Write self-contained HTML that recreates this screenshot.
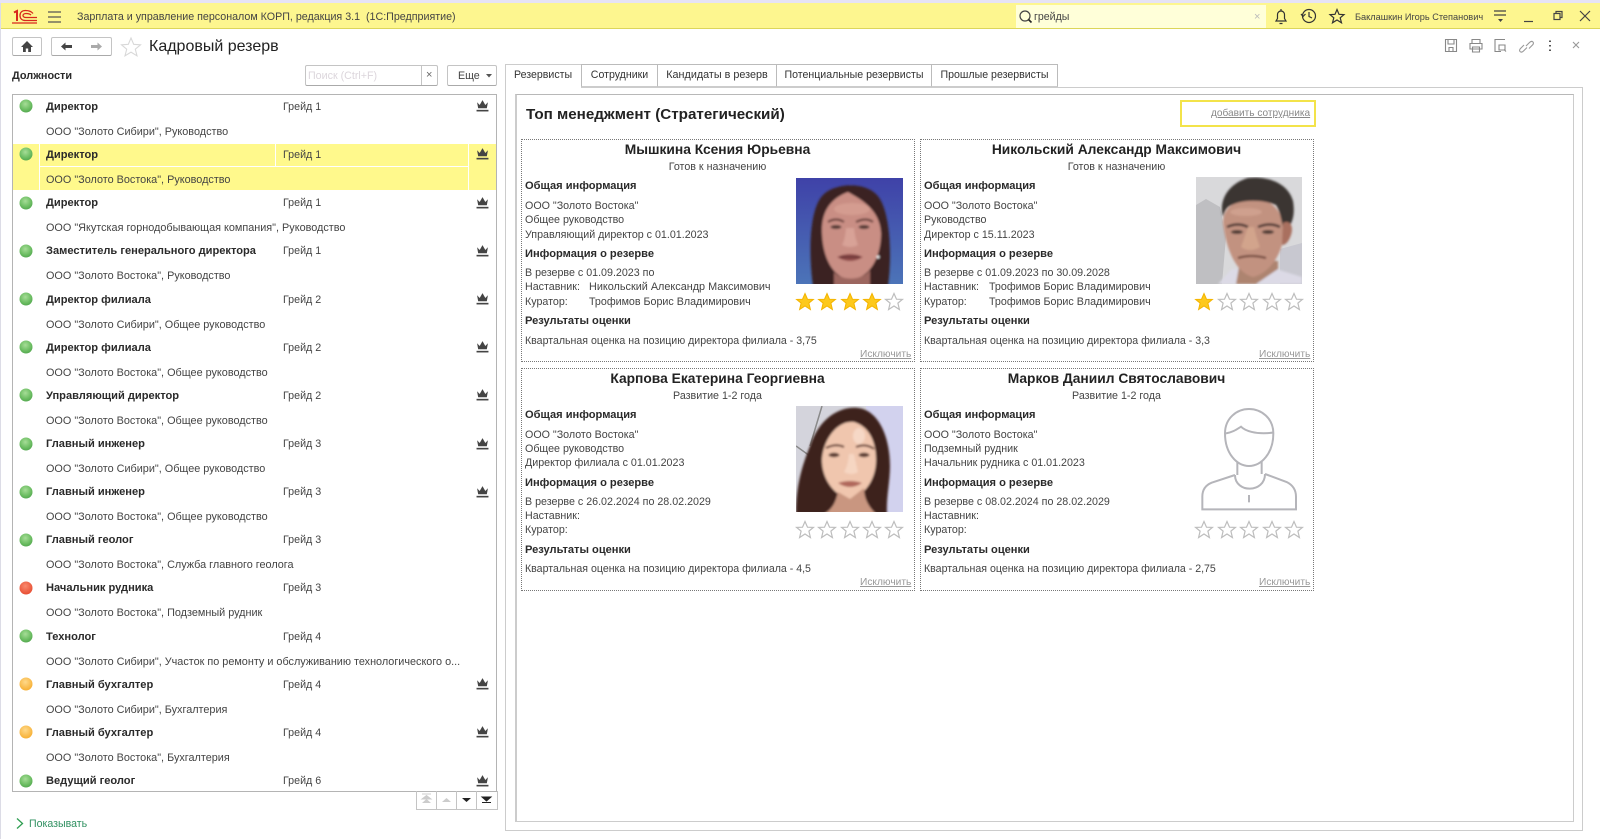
<!DOCTYPE html>
<html lang="ru"><head><meta charset="utf-8"><title>Кадровый резерв</title>
<style>
html,body{margin:0;padding:0;background:#fff}
#p{position:relative;width:1600px;height:839px;overflow:hidden;background:#fff;font-family:"Liberation Sans",Arial,sans-serif;font-size:10.7px;color:#333;filter:blur(.3px)}
#p div,#p svg{position:absolute}
.t{white-space:nowrap;line-height:16px;height:16px}
.b{font-weight:bold;color:#2a2a2a;font-size:11.1px}
.tab{top:64px;height:23px;border:1px solid #bbb;border-bottom:1px solid #ccc;box-sizing:border-box;background:#fff;line-height:21px;text-align:center;white-space:nowrap;font-size:10.6px}
.card{border:1px dotted #777;box-sizing:border-box;width:394px;height:223px;background:#fff}
.g{color:#444}
.l{font-size:10.85px}
.q{font-size:10.6px}
.ex{color:#999;text-decoration:underline;font-size:10.2px}
.n{font-size:13.8px;font-weight:bold;color:#222;text-align:center;width:393px}
.s{text-align:center;width:393px;color:#444}
</style></head><body>
<div id="p">
<svg width="0" height="0" style="left:0;top:0"><defs>
<symbol id="st" viewBox="-10 -10 20 20" overflow="visible"><path d="M0,-8.5 2.5,-2.8 8.4,-2.6 3.9,1.1 5.4,7.5 0,4 -5.4,7.5 -3.9,1.1 -8.4,-2.6 -2.5,-2.8Z" fill="#fff" stroke="#bdbdbd" stroke-width="1.2"/></symbol>
<symbol id="sf" viewBox="-10 -10 20 20" overflow="visible"><path d="M0,-8.5 2.5,-2.8 8.4,-2.6 3.9,1.1 5.4,7.5 0,4 -5.4,7.5 -3.9,1.1 -8.4,-2.6 -2.5,-2.8Z" fill="#fdc91c" stroke="#f4b400" stroke-width="1"/></symbol>
<symbol id="cr" viewBox="0 0 12 12"><path d="M1,3 3.4,5.500 6,1 8.6,5.500 11,3 10,8.5H2Z" fill="#444"/><rect x="0.5" y="10" width="11" height="1.5" fill="#444"/></symbol>
<radialGradient id="gr" cx=".45" cy=".35" r=".7"><stop offset="0" stop-color="#a6dd97"/><stop offset=".6" stop-color="#6fbf65"/><stop offset="1" stop-color="#4fa54c"/></radialGradient>
<radialGradient id="re" cx=".45" cy=".35" r=".7"><stop offset="0" stop-color="#f98a6e"/><stop offset="1" stop-color="#e6492e"/></radialGradient>
<radialGradient id="or" cx=".45" cy=".35" r=".7"><stop offset="0" stop-color="#ffd98a"/><stop offset="1" stop-color="#f6ac2c"/></radialGradient>
<symbol id="dg" viewBox="0 0 14 14"><circle cx="7" cy="7" r="6.5" fill="url(#gr)"/></symbol>
<symbol id="dr" viewBox="0 0 14 14"><circle cx="7" cy="7" r="6.5" fill="url(#re)"/></symbol>
<symbol id="do" viewBox="0 0 14 14"><circle cx="7" cy="7" r="6.5" fill="url(#or)"/></symbol>
<filter id="bl"><feGaussianBlur stdDeviation="1"/></filter>
<linearGradient id="bbg" x1="0" y1="0" x2="0" y2="1"><stop offset="0" stop-color="#3f42a8"/><stop offset="1" stop-color="#4c74b8"/></linearGradient>
</defs></svg>

<!-- title bar -->
<div style="left:0;top:0;width:1600px;height:3px;background:#e6e3f4"></div>
<div style="left:0;top:3px;width:1600px;height:25px;background:#fdf68f;border-bottom:1px solid #dcd65a"></div>
<div style="left:0;top:3px;width:1px;height:836px;background:#dcdce6"></div>
<svg style="left:12px;top:9px" width="26" height="15" fill="none" stroke="#d8261c"><path d="M2,3.500 5,2V12" stroke-width="2"/><path d="M21,4.500C19,2 16,1.500 13.500,1.500C10,1.500 8,3.500 8,6.500C8,9.500 10,11.500 13.500,11.500H25" stroke-width="1.300"/><path d="M19,6C18,5 16,4.500 14,4.500C12,4.500 11,5.500 11,6.500C11,7.500 12,8.500 14,8.500H25" stroke-width="1.300"/><path d="M0,14H25" stroke-width="1.200"/></svg>
<svg style="left:48px;top:11px" width="13" height="12"><path d="M0,1H13M0,6H13M0,11H13" stroke="#555" stroke-width="1.3"/></svg>
<div class="t" style="left:77px;top:9px;color:#444">Зарплата и управление персоналом КОРП, редакция 3.1&nbsp; (1С:Предприятие)</div>
<div style="left:1016px;top:5px;width:250px;height:23px;background:#ffffd9"></div>
<svg style="left:1018px;top:9px" width="15" height="15"><circle cx="7" cy="7" r="5" fill="none" stroke="#444" stroke-width="1.2"/><path d="M10.5,10.5 13.5,13.5" stroke="#222" stroke-width="1.6"/></svg>
<div class="t" style="left:1034px;top:9px;color:#444;font-size:10.6px">грейды</div>
<div class="t" style="left:1254px;top:9px;color:#bbb;font-size:11px">×</div>
<svg style="left:1273px;top:8px" width="150" height="17" fill="none" stroke="#333" stroke-width="1.2"><path d="M3,13H13L11.5,10.5V6.5A3.5,3.5 0 0 0 4.5,6.5V10.5ZM6.5,15.5H9.5M8,1V3"/><circle cx="36" cy="8" r="6.5"/><path d="M36,4V8.5L39,10M28,6 30,8.5 32.5,6"/><path transform="translate(1,0)" d="M63,1.5 65,6.3 70,6.6 66.200,9.800 67.500,14.800 63,12 58.500,14.800 59.800,9.800 56,6.600 61,6.300Z"/></svg>
<div class="t" style="left:1355px;top:9px;font-size:9.2px;color:#444">Баклашкин Игорь Степанович</div>
<svg style="left:1493px;top:8px" width="100" height="17" fill="none" stroke="#444" stroke-width="1.2"><path d="M1,3H13M1,7H13"/><path d="M5,11H10L7.500,14Z" fill="#444" stroke="none"/><path d="M31,13.500H40"/><g transform="translate(1,0)"><rect x="60" y="5.500" width="6" height="6"/><path d="M62,5.500V3.500H68V9.500H66"/></g><path d="M87,3 97,13M97,3 87,13"/></svg>

<!-- toolbar -->
<div style="left:12px;top:37px;width:30px;height:19px;border:1px solid #c4c4c4;border-bottom-color:#aaa;border-radius:2px;box-sizing:border-box"></div>
<svg style="left:20px;top:40px" width="14" height="13"><path d="M7,1 13,7H11V12H8.200V8.500H5.800V12H3V7H1Z" fill="#444"/></svg>
<div style="left:51px;top:37px;width:61px;height:19px;border:1px solid #c4c4c4;border-bottom-color:#aaa;border-radius:2px;box-sizing:border-box"></div>
<svg style="left:60px;top:41px" width="44" height="11"><path d="M1,5.500 5.500,1.500V4H12V7H5.500V9.500Z" fill="#444"/><path d="M42,5.500 37.500,1.500V4H31V7H37.500V9.500Z" fill="#aaa"/></svg>
<svg style="left:120px;top:36px" width="22" height="21"><path d="M11,2 13.700,8.300 20.500,8.800 15.300,13.200 17,19.800 11,16.200 5,19.800 6.700,13.200 1.500,8.800 8.300,8.300Z" fill="#fff" stroke="#d8d8d8" stroke-width="1.1"/></svg>
<div class="t" style="left:149px;top:38px;font-size:16px;color:#222;height:18px;line-height:18px">Кадровый резерв</div>
<svg style="left:1444px;top:38px" width="142" height="16" fill="none" stroke="#888" stroke-width="1.1"><path d="M1.500,1.500H12.500V13.500H1.500ZM4,1.500V6H10V1.500M5,13.500V9.500H9V13.500"/><path d="M28,5V1.500H36V5M26,5.500H38V11H26ZM28.500,9H35.500V14H28.500Z"/><path transform="translate(-1,0)" d="M58,13.500H52V1.500H62M56,7H62V12H56ZM61,11.500 63,13.500"/><path transform="translate(-1,0)" d="M81,7 77.500,10.500C75,13 78,15.500 80.500,13L84,9.500M83,8 86.500,4.500C89,2 92,4.500 89.500,7L86,10.500" stroke="#999"/><path transform="translate(-2,0)" d="M108,2.500V4M108,7V8.500M108,11.500V13" stroke="#555" stroke-width="2"/><path transform="translate(-1,0)" d="M130,4 136,10M136,4 130,10" stroke="#999"/></svg>

<!-- left header -->
<div class="t b" style="left:12px;top:68px;font-size:10.9px">Должности</div>
<div style="left:305px;top:65px;width:133px;height:21px;border:1px solid #c4c4c4;border-bottom-color:#aaa;box-sizing:border-box;border-radius:2px"></div>
<div style="left:421px;top:66px;width:1px;height:19px;background:#c4c4c4"></div>
<div class="t" style="left:308px;top:68px;color:#dcd6dc">Поиск (Ctrl+F)</div>
<div class="t" style="left:426px;top:67px;color:#666;font-size:11px">×</div>
<div style="left:447px;top:65px;width:50px;height:21px;border:1px solid #c4c4c4;border-bottom-color:#aaa;box-sizing:border-box;border-radius:2px"></div>
<div class="t" style="left:458px;top:68px;color:#444">Еще</div>
<svg style="left:486px;top:74px" width="6" height="4"><path d="M0,0H6L3,3.500Z" fill="#555"/></svg>

<!-- list -->
<div style="left:12px;top:94px;width:485px;height:698px;border:1px solid #b4b4b4;box-sizing:border-box"></div>
<div style="left:13px;top:144px;width:483px;height:46px;background:#fff98c"></div>
<div style="left:39px;top:144px;width:1px;height:46px;background:#fff"></div>
<div style="left:275px;top:144px;width:1px;height:22px;background:#fff"></div>
<div style="left:468px;top:144px;width:1px;height:46px;background:#fff"></div>
<div style="left:40px;top:166px;width:428px;height:1px;background:#fff"></div>

<svg style="left:19px;top:99px" width="14" height="14"><use href="#dg"/></svg>
<svg style="left:19px;top:147px" width="14" height="14"><use href="#dg"/></svg>
<svg style="left:19px;top:196px" width="14" height="14"><use href="#dg"/></svg>
<svg style="left:19px;top:244px" width="14" height="14"><use href="#dg"/></svg>
<svg style="left:19px;top:292px" width="14" height="14"><use href="#dg"/></svg>
<svg style="left:19px;top:340px" width="14" height="14"><use href="#dg"/></svg>
<svg style="left:19px;top:388px" width="14" height="14"><use href="#dg"/></svg>
<svg style="left:19px;top:437px" width="14" height="14"><use href="#dg"/></svg>
<svg style="left:19px;top:485px" width="14" height="14"><use href="#dg"/></svg>
<svg style="left:19px;top:533px" width="14" height="14"><use href="#dg"/></svg>
<svg style="left:19px;top:581px" width="14" height="14"><use href="#dr"/></svg>
<svg style="left:19px;top:629px" width="14" height="14"><use href="#dg"/></svg>
<svg style="left:19px;top:677px" width="14" height="14"><use href="#do"/></svg>
<svg style="left:19px;top:725px" width="14" height="14"><use href="#do"/></svg>
<svg style="left:19px;top:774px" width="14" height="14"><use href="#dg"/></svg>

<svg style="left:476px;top:99px" width="13" height="13"><use href="#cr"/></svg>
<svg style="left:476px;top:147px" width="13" height="13"><use href="#cr"/></svg>
<svg style="left:476px;top:196px" width="13" height="13"><use href="#cr"/></svg>
<svg style="left:476px;top:244px" width="13" height="13"><use href="#cr"/></svg>
<svg style="left:476px;top:292px" width="13" height="13"><use href="#cr"/></svg>
<svg style="left:476px;top:340px" width="13" height="13"><use href="#cr"/></svg>
<svg style="left:476px;top:388px" width="13" height="13"><use href="#cr"/></svg>
<svg style="left:476px;top:437px" width="13" height="13"><use href="#cr"/></svg>
<svg style="left:476px;top:485px" width="13" height="13"><use href="#cr"/></svg>
<svg style="left:476px;top:677px" width="13" height="13"><use href="#cr"/></svg>
<svg style="left:476px;top:725px" width="13" height="13"><use href="#cr"/></svg>
<svg style="left:476px;top:774px" width="13" height="13"><use href="#cr"/></svg>

<div class="t b" style="left:46px;top:99px">Директор</div><div class="t g" style="left:283px;top:99px">Грейд 1</div><div class="t g l" style="left:46px;top:124px">ООО "Золото Сибири", Руководство</div>
<div class="t b" style="left:46px;top:147px">Директор</div><div class="t g" style="left:283px;top:147px">Грейд 1</div><div class="t g l" style="left:46px;top:172px">ООО "Золото Востока", Руководство</div>
<div class="t b" style="left:46px;top:195px">Директор</div><div class="t g" style="left:283px;top:195px">Грейд 1</div><div class="t g l" style="left:46px;top:220px">ООО "Якутская горнодобывающая компания", Руководство</div>
<div class="t b" style="left:46px;top:243px">Заместитель генерального директора</div><div class="t g" style="left:283px;top:243px">Грейд 1</div><div class="t g l" style="left:46px;top:268px">ООО "Золото Востока", Руководство</div>
<div class="t b" style="left:46px;top:292px">Директор филиала</div><div class="t g" style="left:283px;top:292px">Грейд 2</div><div class="t g l" style="left:46px;top:317px">ООО "Золото Сибири", Общее руководство</div>
<div class="t b" style="left:46px;top:340px">Директор филиала</div><div class="t g" style="left:283px;top:340px">Грейд 2</div><div class="t g l" style="left:46px;top:365px">ООО "Золото Востока", Общее руководство</div>
<div class="t b" style="left:46px;top:388px">Управляющий директор</div><div class="t g" style="left:283px;top:388px">Грейд 2</div><div class="t g l" style="left:46px;top:413px">ООО "Золото Востока", Общее руководство</div>
<div class="t b" style="left:46px;top:436px">Главный инженер</div><div class="t g" style="left:283px;top:436px">Грейд 3</div><div class="t g l" style="left:46px;top:461px">ООО "Золото Сибири", Общее руководство</div>
<div class="t b" style="left:46px;top:484px">Главный инженер</div><div class="t g" style="left:283px;top:484px">Грейд 3</div><div class="t g l" style="left:46px;top:509px">ООО "Золото Востока", Общее руководство</div>
<div class="t b" style="left:46px;top:532px">Главный геолог</div><div class="t g" style="left:283px;top:532px">Грейд 3</div><div class="t g l" style="left:46px;top:557px">ООО "Золото Востока", Служба главного геолога</div>
<div class="t b" style="left:46px;top:580px">Начальник рудника</div><div class="t g" style="left:283px;top:580px">Грейд 3</div><div class="t g l" style="left:46px;top:605px">ООО "Золото Востока", Подземный рудник</div>
<div class="t b" style="left:46px;top:629px">Технолог</div><div class="t g" style="left:283px;top:629px">Грейд 4</div><div class="t g l" style="left:46px;top:654px">ООО "Золото Сибири", Участок по ремонту и обслуживанию технологического о...</div>
<div class="t b" style="left:46px;top:677px">Главный бухгалтер</div><div class="t g" style="left:283px;top:677px">Грейд 4</div><div class="t g l" style="left:46px;top:702px">ООО "Золото Сибири", Бухгалтерия</div>
<div class="t b" style="left:46px;top:725px">Главный бухгалтер</div><div class="t g" style="left:283px;top:725px">Грейд 4</div><div class="t g l" style="left:46px;top:750px">ООО "Золото Востока", Бухгалтерия</div>
<div class="t b" style="left:46px;top:773px">Ведущий геолог</div><div class="t g" style="left:283px;top:773px">Грейд 6</div>

<!-- pager -->
<svg style="left:416px;top:791px" width="82" height="19"><path d="M.5,0V18.500H81.500V0M20.500,0V18.500M40.500,0V18.500M60.500,0V18.500" fill="none" stroke="#c4c4c4"/><path d="M6,8 10.500,4.500 15,8ZM6,3H15" fill="#ccc" stroke="#ccc"/><path d="M6,11 10.500,7 15,11Z" transform="translate(0,1)" fill="#ccc"/><path d="M26,11 30.500,7 35,11Z" fill="#ccc"/><path d="M46,7H55L50.500,11Z" fill="#222"/><path d="M66,6H75L70.500,10ZM66,11.500H75" fill="#222" stroke="#222"/></svg>
<svg style="left:16px;top:817px" width="8" height="13"><path d="M1,1.500 6.500,6.500 1,11.500" fill="none" stroke="#2f9e52" stroke-width="1.3"/></svg>
<div class="t" style="left:29px;top:816px;color:#2f9060;font-size:10.6px">Показывать</div>

<!-- tabs -->
<div style="left:505px;top:87px;width:1078px;height:744px;border:1px solid #ccc;box-sizing:border-box"></div>
<div style="left:505px;top:64px;width:77px;height:24px;border:1px solid #ccc;border-bottom:0;box-sizing:border-box;background:#fff"></div>
<div class="t" style="left:514px;top:67px;font-size:10.6px">Резервисты</div>
<div class="tab" style="left:581px;width:77px">Сотрудники</div>
<div class="tab" style="left:657px;width:120px;font-size:10.8px">Кандидаты в резерв</div>
<div class="tab" style="left:776px;width:156px">Потенциальные резервисты</div>
<div class="tab" style="left:931px;width:127px">Прошлые резервисты</div>
<div style="left:515px;top:94px;width:1059px;height:728px;border:1px solid #b8b8b8;border-right-color:#ccc;border-bottom-color:#ccc;border-left-color:#ccc;box-sizing:border-box;border-left-width:2px"></div>

<div class="t" style="left:526px;top:106px;font-size:15.2px;font-weight:bold;color:#222;height:18px;line-height:18px">Топ менеджмент (Стратегический)</div>
<div style="left:1180px;top:100px;width:136px;height:27px;border:2px solid #f3e34a;box-sizing:border-box"></div>
<div class="t ex" style="left:1211px;top:106px;color:#888;font-size:10.1px">добавить сотрудника</div>

<!-- cards -->
<div class="card" style="left:521px;top:139px"></div>
<div class="card" style="left:920px;top:139px"></div>
<div class="card" style="left:521px;top:368px"></div>
<div class="card" style="left:920px;top:368px"></div>

<!-- card 1 -->
<div class="t n" style="left:521px;top:142px">Мышкина Ксения Юрьевна</div>
<div class="t s" style="left:521px;top:159px">Готов к назначению</div>
<div class="t b" style="left:525px;top:178px">Общая информация</div>
<div class="t g" style="left:525px;top:198px">ООО "Золото Востока"</div>
<div class="t g" style="left:525px;top:212px">Общее руководство</div>
<div class="t g" style="left:525px;top:227px">Управляющий директор с 01.01.2023</div>
<div class="t b" style="left:525px;top:246px">Информация о резерве</div>
<div class="t g" style="left:525px;top:265px">В резерве с 01.09.2023 по</div>
<div class="t g" style="left:525px;top:279px">Наставник:</div><div class="t g" style="left:589px;top:279px;font-size:10.85px">Никольский Александр Максимович</div>
<div class="t g" style="left:525px;top:294px">Куратор:</div><div class="t g" style="left:589px;top:294px">Трофимов Борис Владимирович</div>
<div class="t b" style="left:525px;top:313px">Результаты оценки</div>
<div class="t g q" style="left:525px;top:333px">Квартальная оценка на позицию директора филиала - 3,75</div>
<div class="t ex" style="left:860px;top:347px">Исключить</div>

<!-- card 2 -->
<div class="t n" style="left:920px;top:142px">Никольский Александр Максимович</div>
<div class="t s" style="left:920px;top:159px">Готов к назначению</div>
<div class="t b" style="left:924px;top:178px">Общая информация</div>
<div class="t g" style="left:924px;top:198px">ООО "Золото Востока"</div>
<div class="t g" style="left:924px;top:212px">Руководство</div>
<div class="t g" style="left:924px;top:227px">Директор с 15.11.2023</div>
<div class="t b" style="left:924px;top:246px">Информация о резерве</div>
<div class="t g" style="left:924px;top:265px">В резерве с 01.09.2023 по 30.09.2028</div>
<div class="t g" style="left:924px;top:279px">Наставник:</div><div class="t g" style="left:989px;top:279px">Трофимов Борис Владимирович</div>
<div class="t g" style="left:924px;top:294px">Куратор:</div><div class="t g" style="left:989px;top:294px">Трофимов Борис Владимирович</div>
<div class="t b" style="left:924px;top:313px">Результаты оценки</div>
<div class="t g q" style="left:924px;top:333px">Квартальная оценка на позицию директора филиала - 3,3</div>
<div class="t ex" style="left:1259px;top:347px">Исключить</div>

<!-- card 3 -->
<div class="t n" style="left:521px;top:371px">Карпова Екатерина Георгиевна</div>
<div class="t s" style="left:521px;top:388px">Развитие 1-2 года</div>
<div class="t b" style="left:525px;top:407px">Общая информация</div>
<div class="t g" style="left:525px;top:427px">ООО "Золото Востока"</div>
<div class="t g" style="left:525px;top:441px">Общее руководство</div>
<div class="t g" style="left:525px;top:455px">Директор филиала с 01.01.2023</div>
<div class="t b" style="left:525px;top:475px">Информация о резерве</div>
<div class="t g" style="left:525px;top:494px">В резерве с 26.02.2024 по 28.02.2029</div>
<div class="t g" style="left:525px;top:508px">Наставник:</div>
<div class="t g" style="left:525px;top:522px">Куратор:</div>
<div class="t b" style="left:525px;top:542px">Результаты оценки</div>
<div class="t g q" style="left:525px;top:561px">Квартальная оценка на позицию директора филиала - 4,5</div>
<div class="t ex" style="left:860px;top:575px">Исключить</div>

<!-- card 4 -->
<div class="t n" style="left:920px;top:371px">Марков Даниил Святославович</div>
<div class="t s" style="left:920px;top:388px">Развитие 1-2 года</div>
<div class="t b" style="left:924px;top:407px">Общая информация</div>
<div class="t g" style="left:924px;top:427px">ООО "Золото Востока"</div>
<div class="t g" style="left:924px;top:441px">Подземный рудник</div>
<div class="t g" style="left:924px;top:455px">Начальник рудника с 01.01.2023</div>
<div class="t b" style="left:924px;top:475px">Информация о резерве</div>
<div class="t g" style="left:924px;top:494px">В резерве с 08.02.2024 по 28.02.2029</div>
<div class="t g" style="left:924px;top:508px">Наставник:</div>
<div class="t g" style="left:924px;top:522px">Куратор:</div>
<div class="t b" style="left:924px;top:542px">Результаты оценки</div>
<div class="t g q" style="left:924px;top:561px">Квартальная оценка на позицию директора филиала - 2,75</div>
<div class="t ex" style="left:1259px;top:575px">Исключить</div>

<!-- photo 1 -->
<svg style="left:796px;top:178px" width="107" height="106" viewBox="0 0 107 106">
<rect width="107" height="106" fill="url(#bbg)"/>
<g filter="url(#bl)">
<path d="M17,108C13,80 12,30 28,16C40,5 68,4 80,16C95,30 96,80 92,108Z" fill="#3a2322"/>
<path d="M26,55C25,32 36,20 52,14C62,20 84,30 85,55C85,82 72,100 55,102C38,100 27,82 26,55Z" fill="#c98e84"/>
<path d="M38,94C46,103 66,103 74,92V108H38Z" fill="#9c665e"/>
<path d="M32,44Q40,39 48,44M60,44Q70,39 77,44" stroke="#6a423c" stroke-width="2.200" fill="none"/>
<ellipse cx="40" cy="49" rx="5.500" ry="2" fill="#553a34"/><ellipse cx="68" cy="49" rx="5.500" ry="2" fill="#553a34"/>
<path d="M50,50Q49,62 46,67Q54,71 62,67Q59,60 58,50" fill="#d8a297"/>
<path d="M41,79Q54,73 67,79Q54,87 41,79Z" fill="#8e4a48"/>
<path d="M44,79H64" stroke="#3e2222" stroke-width="1"/>
<ellipse cx="56" cy="31" rx="18" ry="6" fill="#d49c90"/>
<circle cx="82" cy="79" r="1.500" fill="#eee"/>
</g></svg>

<!-- photo 2 -->
<svg style="left:1196px;top:177px" width="106" height="107" viewBox="0 0 106 107">
<rect width="106" height="107" fill="#d9d9db"/>
<path d="M0,28 10,22 24,30 30,60 26,107H0Z" fill="#bfbfc2"/>
<path d="M84,72 106,66V107H84Z" fill="#c8c8d0"/>
<g filter="url(#bl)">
<path d="M22,107 36,92H80L106,100V107Z" fill="#dcdae6"/>
<path d="M44,84H82V92L60,107H40Z" fill="#ad8470"/>
<path d="M27,46C27,30 40,22 58,22C76,22 87,34 87,52C90,70 76,96 57,100C40,96 30,72 27,46Z" fill="#c29280"/>
<path d="M27,40C22,22 34,6 52,1C72,-1 92,6 97,24C99,36 97,44 93,50L87,50C85,42 84,34 80,28C66,22 44,22 32,30C29,33 28,36 27,40Z" fill="#3b3633"/>
<path d="M87,46C94,42 98,50 95,58C93,64 90,68 86,68Z" fill="#a9705e"/>
<path d="M31,50Q42,45 52,50M62,50Q74,45 84,50" stroke="#4a3430" stroke-width="2.500" fill="none"/>
<ellipse cx="41" cy="55" rx="6" ry="2" fill="#4e3a34"/><ellipse cx="72" cy="55" rx="6" ry="2" fill="#4e3a34"/>
<path d="M52,50Q48,62 45,70Q54,76 64,70Q60,60 58,50" fill="#d2a48c"/>
<path d="M42,81Q55,77 70,81" stroke="#6a4036" stroke-width="2" fill="none"/>
<ellipse cx="50" cy="35" rx="16" ry="4" fill="#cfa08e"/>
</g></svg>

<!-- photo 3 -->
<svg style="left:796px;top:406px" width="107" height="106" viewBox="0 0 107 106">
<rect width="107" height="106" fill="#d4d4dc"/>
<path d="M70,0H107V106H80Z" fill="#d2d2ee"/>
<path d="M26,0 14,40M0,40 14,50" stroke="#8a8a8a" stroke-width="1.500" fill="none"/>
<g filter="url(#bl)">
<path d="M0,108C0,80 6,60 14,40C24,10 46,0 62,2C82,4 94,30 94,60C94,76 90,92 91,108H30Z" fill="#3d211a"/>
<path d="M26,52C28,32 42,14 58,16C72,20 80,34 80,54C80,74 68,90 54,93C40,91 25,74 26,52Z" fill="#f0c6ae"/>
<path d="M28,108C38,102 40,94 42,86L54,93 68,82C68,92 72,100 80,108Z" fill="#c99680"/>
<path d="M30,42Q40,37 48,41M60,41Q70,37 78,43" stroke="#5a3026" stroke-width="2" fill="none"/>
<ellipse cx="38" cy="49" rx="5.500" ry="2.200" fill="#5a3a30"/><ellipse cx="68" cy="49" rx="5.500" ry="2.200" fill="#5a3a30"/>
<path d="M53,48Q52,60 48,66Q56,70 62,66Q60,58 58,48" fill="#f6d6c2"/>
<path d="M42,77Q54,73 66,77Q54,85 42,77Z" fill="#b0685c"/>
<ellipse cx="63" cy="30" rx="6" ry="8" fill="#f6d8c6"/>
</g></svg>

<!-- placeholder -->
<svg style="left:1130px;top:360px" width="220" height="240" viewBox="0 0 660 720" fill="none" stroke="#b5b5ba" stroke-width="6">
<path d="M357,147C320,147 285,175 285,220C285,280 320,318 357,318C394,318 430,280 430,220C430,175 394,147 357,147Z"/>
<path d="M288,220C310,216 320,208 333,200C345,212 375,224 428,218"/>
<path d="M322,305V345M395,305V342"/>
<path d="M315,345C315,400 405,400 405,342"/>
<path d="M315,345 245,368C225,376 217,392 217,410V448H498V410C498,392 490,376 470,366L405,342"/>
<path d="M357,405V427"/>
</svg>

<!-- stars -->
<svg style="left:795px;top:292px" width="20" height="20"><use href="#sf"/></svg>
<svg style="left:817px;top:292px" width="20" height="20"><use href="#sf"/></svg>
<svg style="left:840px;top:292px" width="20" height="20"><use href="#sf"/></svg>
<svg style="left:862px;top:292px" width="20" height="20"><use href="#sf"/></svg>
<svg style="left:884px;top:292px" width="20" height="20"><use href="#st"/></svg>
<svg style="left:1194px;top:292px" width="20" height="20"><use href="#sf"/></svg>
<svg style="left:1217px;top:292px" width="20" height="20"><use href="#st"/></svg>
<svg style="left:1239px;top:292px" width="20" height="20"><use href="#st"/></svg>
<svg style="left:1262px;top:292px" width="20" height="20"><use href="#st"/></svg>
<svg style="left:1284px;top:292px" width="20" height="20"><use href="#st"/></svg>
<svg style="left:795px;top:520px" width="20" height="20"><use href="#st"/></svg>
<svg style="left:817px;top:520px" width="20" height="20"><use href="#st"/></svg>
<svg style="left:840px;top:520px" width="20" height="20"><use href="#st"/></svg>
<svg style="left:862px;top:520px" width="20" height="20"><use href="#st"/></svg>
<svg style="left:884px;top:520px" width="20" height="20"><use href="#st"/></svg>
<svg style="left:1194px;top:520px" width="20" height="20"><use href="#st"/></svg>
<svg style="left:1217px;top:520px" width="20" height="20"><use href="#st"/></svg>
<svg style="left:1239px;top:520px" width="20" height="20"><use href="#st"/></svg>
<svg style="left:1262px;top:520px" width="20" height="20"><use href="#st"/></svg>
<svg style="left:1284px;top:520px" width="20" height="20"><use href="#st"/></svg>
</div>
</body></html>
